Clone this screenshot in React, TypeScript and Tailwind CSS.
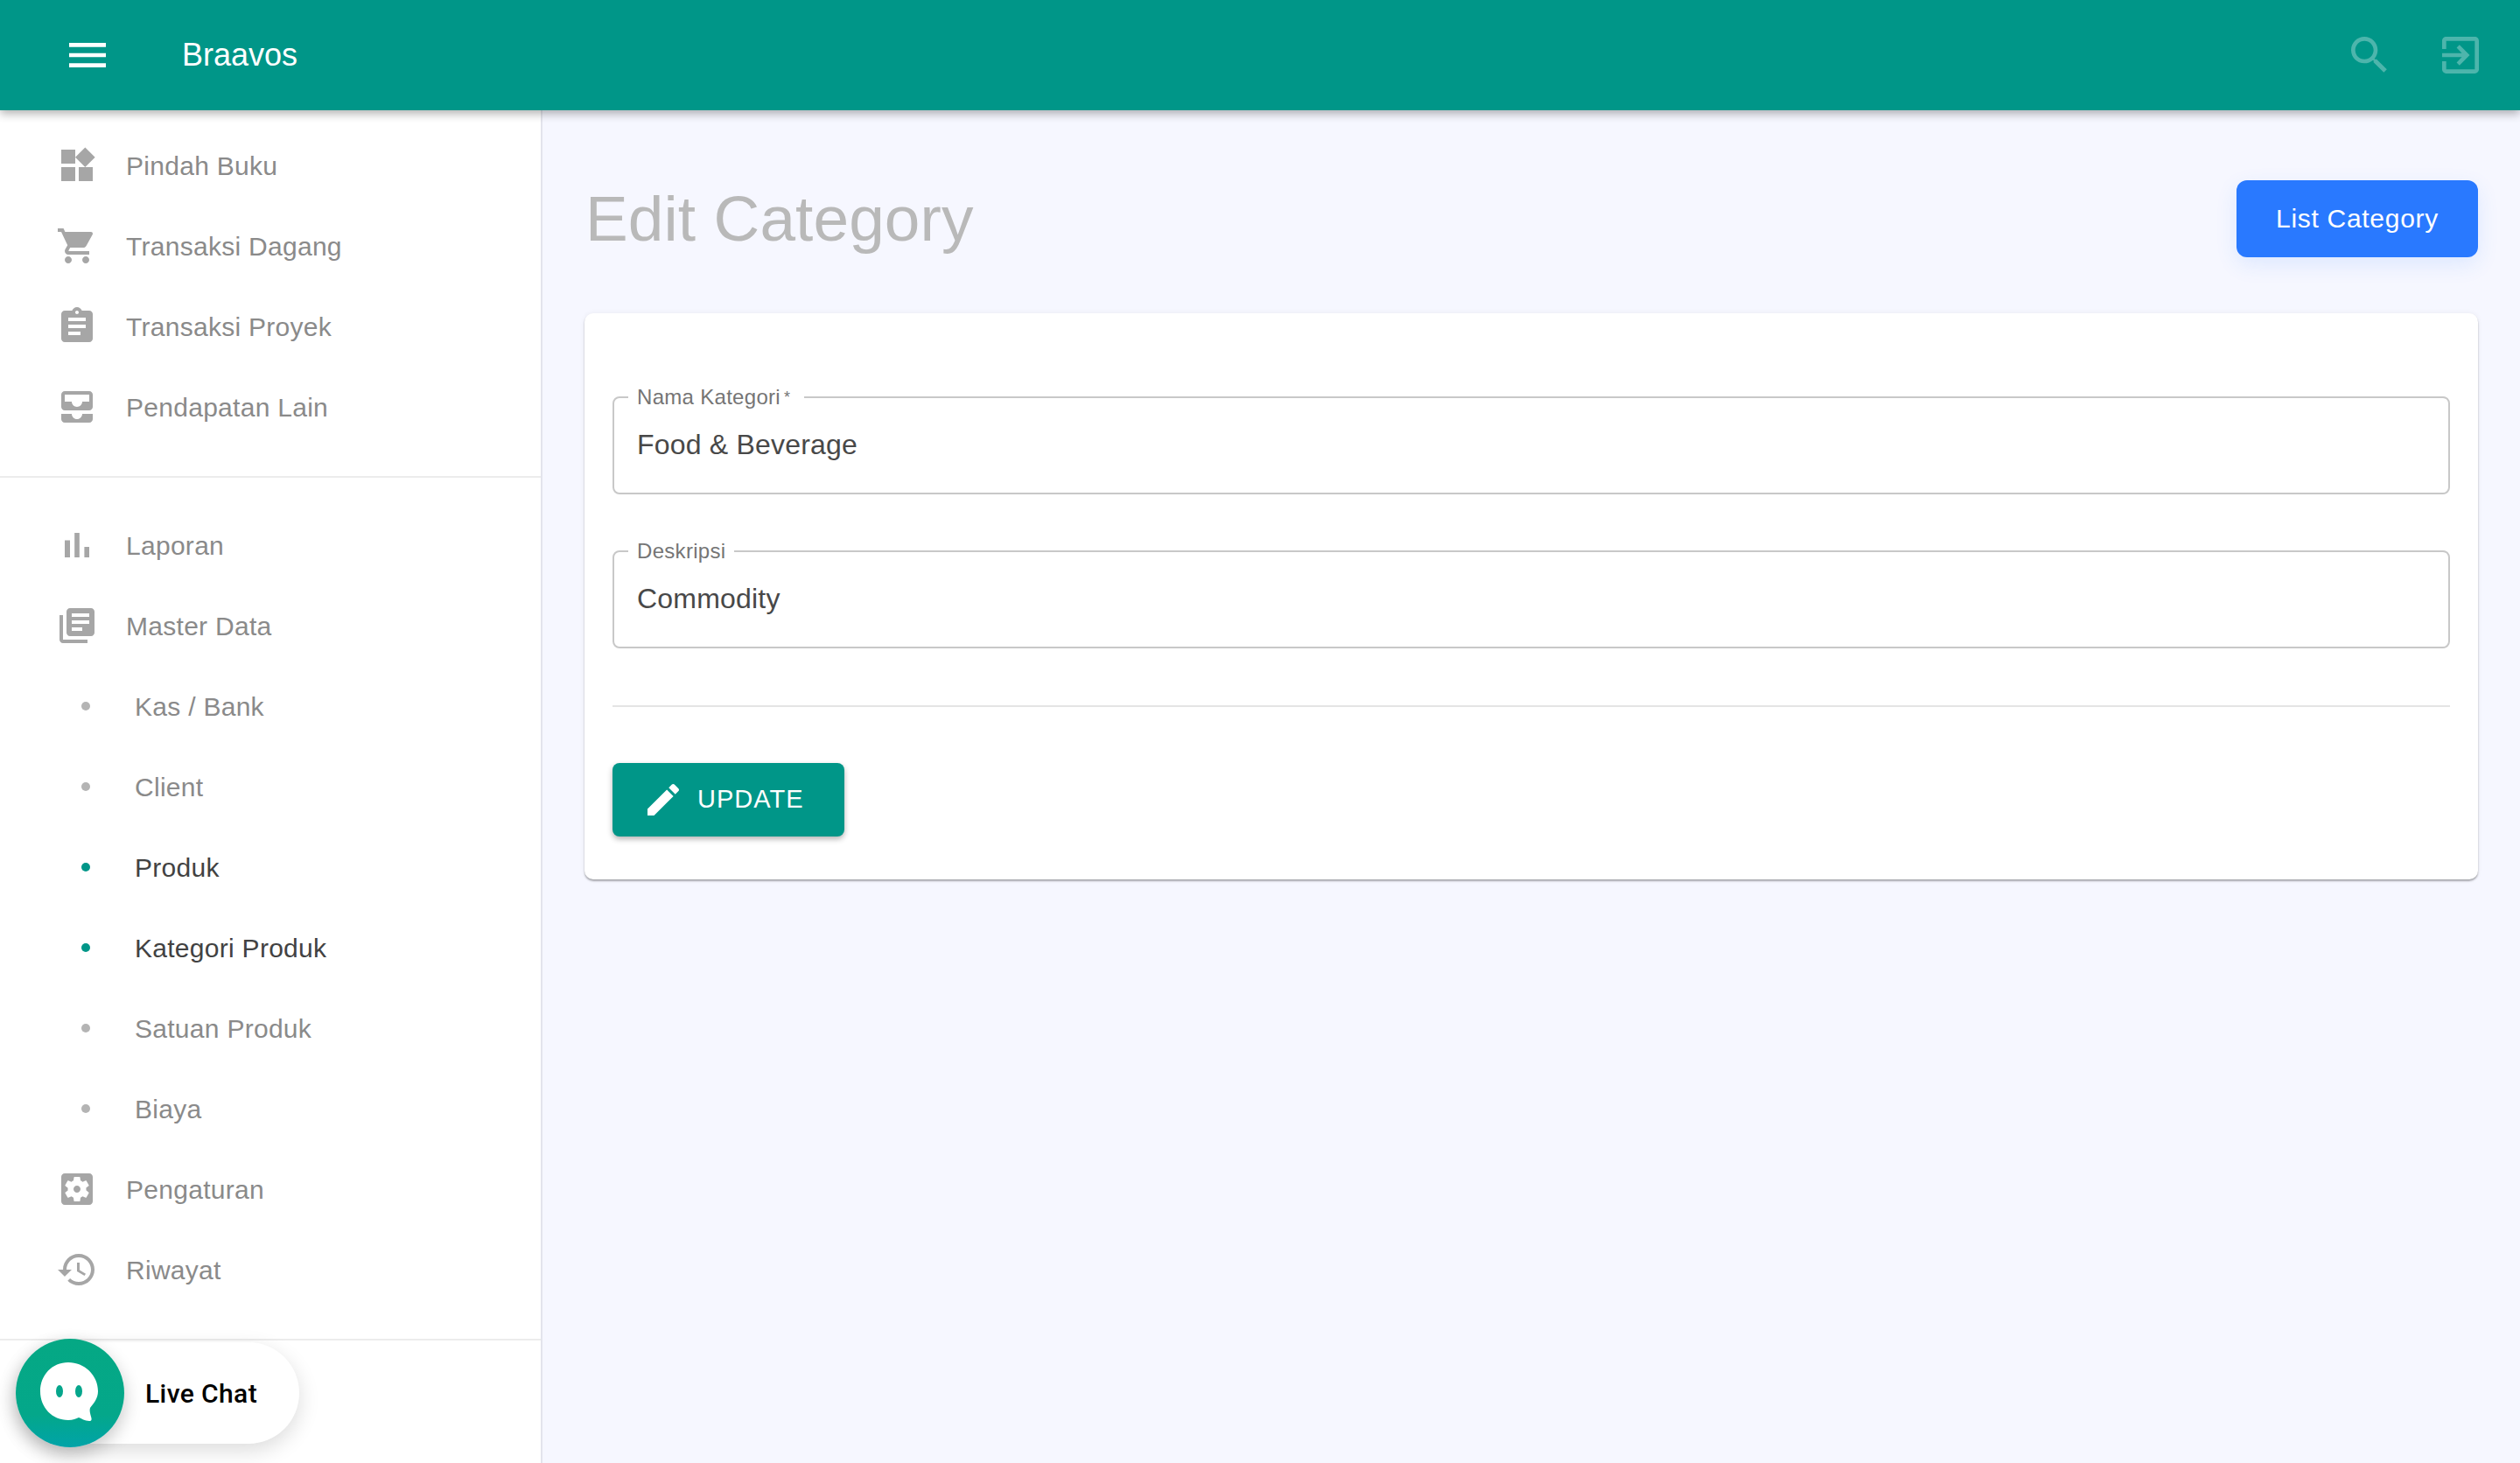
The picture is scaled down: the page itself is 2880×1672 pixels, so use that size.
const icons = {
  menu: 'M3 18h18v-2H3v2zm0-5h18v-2H3v2zm0-7v2h18V6H3z',
  search:
    'M15.5 14h-.79l-.28-.27C15.41 12.59 16 11.11 16 9.5 16 5.91 13.09 3 9.5 3S3 5.91 3 9.5 5.91 16 9.5 16c1.61 0 3.09-.59 4.23-1.57l.27.28v.79l5 4.99L20.49 19l-4.99-5zm-6 0C7.01 14 5 11.99 5 9.5S7.01 5 9.5 5 14 7.01 14 9.5 11.99 14 9.5 14z',
  exit: 'M10.09 15.59L11.5 17l5-5-5-5-1.41 1.41L12.67 11H3v2h9.67l-2.58 2.59zM19 3H5c-1.11 0-2 .9-2 2v4h2V5h14v14H5v-4H3v4c0 1.1.89 2 2 2h14c1.1 0 2-.9 2-2V5c0-1.1-.9-2-2-2z',
  widgets: 'M13 13v8h8v-8h-8zM3 21h8v-8H3v8zM3 3v8h8V3H3zm13.66-1.31L11 7.34 16.66 13l5.66-5.66-5.66-5.65z',
  cart: 'M7 18c-1.1 0-1.99.9-1.99 2S5.9 22 7 22s2-.9 2-2-.9-2-2-2zM1 2v2h2l3.6 7.59-1.35 2.45c-.16.28-.25.61-.25.96 0 1.1.9 2 2 2h12v-2H7.42c-.14 0-.25-.11-.25-.25l.03-.12.9-1.63h7.45c.75 0 1.41-.41 1.75-1.03l3.58-6.49c.08-.14.12-.31.12-.48 0-.55-.45-1-1-1H5.21l-.94-2H1zm16 16c-1.1 0-1.99.9-1.99 2s.89 2 1.99 2 2-.9 2-2-.9-2-2-2z',
  assignment:
    'M19 3h-4.18C14.4 1.84 13.3 1 12 1c-1.3 0-2.4.84-2.82 2H5c-1.1 0-2 .9-2 2v14c0 1.1.9 2 2 2h14c1.1 0 2-.9 2-2V5c0-1.1-.9-2-2-2zm-7 0c.55 0 1 .45 1 1s-.45 1-1 1-1-.45-1-1 .45-1 1-1zm2 14H7v-2h7v2zm3-4H7v-2h10v2zm0-4H7V7h10v2z',
  inbox:
    'M19 3H5c-1.1 0-2 .9-2 2v7c0 1.1.9 2 2 2h14c1.1 0 2-.9 2-2V5c0-1.1-.9-2-2-2zm0 6h-4c0 1.62-1.38 3-3 3s-3-1.38-3-3H5V5h14v4zm-4 7h6v3c0 1.1-.9 2-2 2H5c-1.1 0-2-.9-2-2v-3h6c0 1.66 1.34 3 3 3s3-1.34 3-3z',
  chart: 'M5 9.2h3V19H5zM10.6 5h2.8v14h-2.8zm5.6 8H19v6h-2.8z',
  books:
    'M4 6H2v14c0 1.1.9 2 2 2h14v-2H4V6zm16-4H8c-1.1 0-2 .9-2 2v12c0 1.1.9 2 2 2h12c1.1 0 2-.9 2-2V4c0-1.1-.9-2-2-2zm-1 9H9V9h10v2zm-4 4H9v-2h6v2zm4-8H9V5h10v2z',
  settings:
    'M12 10c-1.1 0-2 .9-2 2s.9 2 2 2 2-.9 2-2-.9-2-2-2zm7-7H5c-1.11 0-2 .9-2 2v14c0 1.1.89 2 2 2h14c1.11 0 2-.9 2-2V5c0-1.1-.89-2-2-2zm-1.75 9c0 .23-.02.46-.05.68l1.48 1.16c.13.11.17.3.08.45l-1.4 2.42c-.09.15-.27.21-.43.15l-1.74-.7c-.36.28-.76.51-1.18.69l-.26 1.85c-.03.17-.18.3-.35.3h-2.8c-.17 0-.32-.13-.35-.29l-.26-1.85c-.43-.18-.82-.41-1.18-.69l-1.74.7c-.16.06-.34 0-.43-.15l-1.4-2.42c-.09-.15-.05-.34.08-.45l1.48-1.16c-.03-.23-.05-.46-.05-.69 0-.23.02-.46.05-.68l-1.48-1.16c-.13-.11-.17-.3-.08-.45l1.4-2.42c.09-.15.27-.21.43-.15l1.74.7c.36-.28.76-.51 1.18-.69l.26-1.85c.03-.17.18-.3.35-.3h2.8c.17 0 .32.13.35.29l.26 1.85c.43.18.82.41 1.18.69l1.74-.7c.16-.06.34 0 .43.15l1.4 2.42c.09.15.05.34-.08.45l-1.48 1.16c.03.23.05.46.05.69z',
  history:
    'M13 3c-4.97 0-9 4.03-9 9H1l3.89 3.89.07.14L9 12H6c0-3.87 3.13-7 7-7s7 3.13 7 7-3.13 7-7 7c-1.93 0-3.68-.79-4.94-2.06l-1.42 1.42C8.27 19.99 10.51 21 13 21c4.97 0 9-4.03 9-9s-4.03-9-9-9zm-1 5v5l4.28 2.54.72-1.21-3.5-2.08V8H12z',
  edit: 'M3 17.25V21h3.75L17.81 9.94l-3.75-3.75L3 17.25zM20.71 7.04c.39-.39.39-1.02 0-1.41l-2.34-2.34c-.39-.39-1.02-.39-1.41 0l-1.83 1.83 3.75 3.75 1.83-1.83z',
};

function Icon({ d, className }: { d: string; className: string }) {
  return (
    <svg viewBox="0 0 24 24" fill="currentColor" className={className} aria-hidden="true">
      <path d={d} />
    </svg>
  );
}

function NavItem({ icon, label }: { icon: string; label: string }) {
  return (
    <div className="flex h-[92px] items-center pl-[64px]">
      <Icon d={icon} className="h-[48px] w-[48px] shrink-0 text-[#a6a6a6]" />
      <span className="ml-[32px] text-[30px] tracking-[0.28px] text-[#8a8a8a]">{label}</span>
    </div>
  );
}

function SubItem({ label, active }: { label: string; active?: boolean }) {
  return (
    <div className="flex h-[92px] items-center pl-[93px]">
      <span className={`h-[10px] w-[10px] shrink-0 rounded-full ${active ? 'bg-[#009688]' : 'bg-[#b4b4b4]'}`} />
      <span className={`ml-[51px] text-[30px] tracking-[0.28px] ${active ? 'text-[#424242]' : 'text-[#8a8a8a]'}`}>
        {label}
      </span>
    </div>
  );
}

function OutlinedField({ label, value, required }: { label: string; value: string; required?: boolean }) {
  return (
    <fieldset className="h-[121px] rounded-lg border-2 border-[#c8c8c8] pl-[26px]">
      <legend className={`-ml-[10px] pl-[10px] text-[24px] leading-[20px] tracking-[0.3px] text-[#757575] ${required ? 'pr-[16px]' : 'pr-[10px]'}`}>
        {label}
        {required && <span className="ml-[4px] align-[2px] text-[18px]">*</span>}
      </legend>
      <div className="mt-[19px] text-[32px] leading-[50px] tracking-[0.2px] text-[#484848]">{value}</div>
    </fieldset>
  );
}

function LiveChat() {
  return (
    <div className="absolute bottom-[22px] left-[18px] flex items-center">
      <div className="flex h-[116px] w-[324px] items-center justify-start rounded-full bg-white pl-[148px] shadow-[0_8px_24px_rgba(0,0,0,0.14)]">
        <span className="font-['Roboto',sans-serif] text-[30px] font-medium tracking-[0.4px] text-black">Live Chat</span>
      </div>
      <div className="absolute left-0 top-[-4px] flex h-[124px] w-[124px] items-center justify-center rounded-full bg-gradient-to-b from-[#05a884] via-[#04a78a] via-70% to-[#02a3a8] shadow-[0_8px_20px_rgba(0,0,0,0.22)]">
        <svg viewBox="0 0 72 72" className="h-[72px] w-[72px]" aria-hidden="true">
          <path
            d="M34 1C15.5 1 2 15.5 2 34s13.5 33 32 33c5.5 0 9-1.5 12-3 3 1 7 4 12 4 3 0 3-2 2-5-1-4-2-7-1-10 4-5 9-11 9-19C68 15.5 52.5 1 34 1z"
            fill="#fff"
          />
          <ellipse cx="24" cy="34" rx="4" ry="7" fill="#05a68c" />
          <ellipse cx="46" cy="34" rx="4" ry="7" fill="#05a68c" />
        </svg>
      </div>
    </div>
  );
}

export default function App() {
  return (
    <div className="relative flex h-[1672px] w-[2880px] flex-col overflow-hidden bg-[#f6f7ff] font-['Liberation_Sans',sans-serif]">
      <header className="relative z-10 flex h-[126px] shrink-0 items-center bg-[#009688] pl-[72px] pr-[40px] shadow-[0_4px_10px_rgba(0,0,0,0.3)]">
        <Icon d={icons.menu} className="h-[56px] w-[56px] text-white" />
        <h1 className="mb-[1px] ml-[80px] text-[36px] text-white">Braavos</h1>
        <div className="ml-auto flex gap-[48px]">
          <Icon d={icons.search} className="h-[56px] w-[56px] text-white/30" />
          <Icon d={icons.exit} className="h-[56px] w-[56px] text-white/30" />
        </div>
      </header>

      <div className="flex min-h-0 flex-1">
        <aside className="w-[620px] shrink-0 border-r-2 border-[#e3e4ec] bg-white pt-[17px]">
          <NavItem icon={icons.widgets} label="Pindah Buku" />
          <NavItem icon={icons.cart} label="Transaksi Dagang" />
          <NavItem icon={icons.assignment} label="Transaksi Proyek" />
          <NavItem icon={icons.inbox} label="Pendapatan Lain" />
          <div className="mb-[31px] mt-[33px] h-[2px] bg-[#ececec]" />
          <NavItem icon={icons.chart} label="Laporan" />
          <NavItem icon={icons.books} label="Master Data" />
          <SubItem label="Kas / Bank" />
          <SubItem label="Client" />
          <SubItem label="Produk" active />
          <SubItem label="Kategori Produk" active />
          <SubItem label="Satuan Produk" />
          <SubItem label="Biaya" />
          <NavItem icon={icons.settings} label="Pengaturan" />
          <NavItem icon={icons.history} label="Riwayat" />
          <div className="mt-[33px] h-[2px] bg-[#ececec]" />
        </aside>

        <main className="min-w-0 flex-1 px-[48px] pt-[80px]">
          <div className="mb-[64px] flex h-[88px] items-center justify-between">
            <h2 className="ml-[1px] text-[73px] tracking-[0.1px] text-[#b9b9b9]">Edit Category</h2>
            <button className="flex h-[88px] w-[276px] items-center justify-center rounded-xl bg-[#2979ff] pb-[2px] text-[30px] tracking-[0.7px] text-white shadow-[0_8px_24px_rgba(41,121,255,0.12)]">
              List Category
            </button>
          </div>

          <section className="h-[647px] rounded-[10px] bg-white px-[32px] pt-[86px] shadow-[0_2px_2px_rgba(0,0,0,0.3),0_0_6px_rgba(0,0,0,0.06)]">
            <OutlinedField label="Nama Kategori" value="Food & Beverage" required />
            <div className="mt-[55px]">
              <OutlinedField label="Deskripsi" value="Commodity" />
            </div>
            <div className="mt-[65px] h-[2px] bg-[#e4e4e4]" />
            <button className="mt-[64px] flex h-[84px] w-[265px] items-center rounded-lg bg-[#009688] pl-[34px] text-[29px] tracking-[1px] text-white shadow-[0_3px_6px_rgba(0,0,0,0.3)]">
              <Icon d={icons.edit} className="h-[48px] w-[48px]" />
              <span className="ml-[15px]">UPDATE</span>
            </button>
          </section>
        </main>
      </div>

      <LiveChat />
    </div>
  );
}
